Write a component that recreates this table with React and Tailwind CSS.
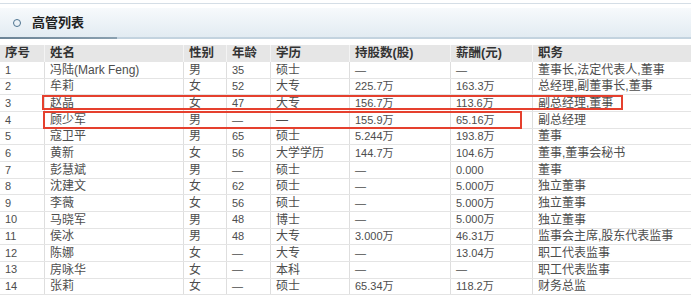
import React from 'react';

const cols = [
  { key: 'no', label: '序号', w: 'w-[45px]', num: true },
  { key: 'name', label: '姓名', w: 'w-[139px]' },
  { key: 'sex', label: '性别', w: 'w-[43px]' },
  { key: 'age', label: '年龄', w: 'w-[44px]', num: true },
  { key: 'edu', label: '学历', w: 'w-[79px]' },
  { key: 'shares', label: '持股数(股)', w: 'w-[101px]', num: true },
  { key: 'pay', label: '薪酬(元)', w: 'w-[82px]', num: true },
  { key: 'job', label: '职务', w: 'flex-1' },
];

const rows = [
  ['1', '冯陆(Mark Feng)', '男', '35', '硕士', '—', '—', '董事长,法定代表人,董事'],
  ['2', '牟莉', '女', '52', '大专', '225.7万', '163.3万', '总经理,副董事长,董事'],
  ['3', '赵晶', '女', '47', '大专', '156.7万', '113.6万', '副总经理,董事'],
  ['4', '顾少军', '男', '—', '—', '155.9万', '65.16万', '副总经理'],
  ['5', '寇卫平', '男', '65', '硕士', '5.244万', '193.8万', '董事'],
  ['6', '黄新', '女', '56', '大学学历', '144.7万', '104.6万', '董事,董事会秘书'],
  ['7', '彭慧斌', '男', '—', '硕士', '—', '0.000', '董事'],
  ['8', '沈建文', '女', '62', '硕士', '—', '5.000万', '独立董事'],
  ['9', '李薇', '女', '56', '硕士', '—', '5.000万', '独立董事'],
  ['10', '马晓军', '男', '48', '博士', '—', '5.000万', '独立董事'],
  ['11', '侯冰', '男', '48', '大专', '3.000万', '46.31万', '监事会主席,股东代表监事'],
  ['12', '陈娜', '女', '—', '大专', '—', '13.04万', '职工代表监事'],
  ['13', '房咏华', '女', '—', '本科', '—', '—', '职工代表监事'],
  ['14', '张莉', '女', '—', '硕士', '65.34万', '118.2万', '财务总监'],
];

const App = () => {
  return (
    <div
      className="w-[691px] h-[307px] bg-white overflow-hidden"
      style={{ fontFamily: '"Liberation Sans", "Noto Sans CJK SC", sans-serif' }}
    >
      {/* thin top rule */}
      <div className="pt-[3px]">
        <div className="h-[1px] bg-[#d5dee6]" />
      </div>

      {/* section title bar */}
      <div className="mt-[4px] h-[29px] bg-gradient-to-b from-[#f7fafc] to-[#e2ebf2] flex items-center pl-[13px]">
        <span className="w-[8px] h-[8px] rounded-full border-[1.5px] border-[#4d7390]" />
        <span className="ml-[11px] text-[13px] font-bold text-[#222]">高管列表</span>
      </div>
      <div className="flex h-[2px]">
        <div className="w-[117px] bg-gradient-to-r from-[#6c8496] to-[#8aa0b0]" />
        <div className="flex-1 bg-[#c3d3df]" />
      </div>

      {/* executives table */}
      <div className="relative mt-[6px]">
        <div className="flex h-[17px] bg-[#e6e6e6] text-[12.5px] font-bold text-[#333]">
          {cols.map((c, i) => (
            <div
              key={c.key}
              className={`${c.w} flex items-center pl-[5px] ${i < cols.length - 1 ? 'border-r border-[#f4f4f4]' : ''}`}
            >
              {c.label}
            </div>
          ))}
        </div>

        {rows.map((r) => (
          <div key={r[0]} className="flex h-[16.67px] border-b border-[#e4e4e4] text-[#4d4d4d]">
            {cols.map((c, i) => (
              <div
                key={c.key}
                className={`${c.w} flex items-center pl-[5px] whitespace-nowrap ${
                  c.num ? 'text-[11px]' : 'text-[12px]'
                } ${i < cols.length - 1 ? 'border-r border-[#dedede]' : ''}`}
              >
                {r[i]}
              </div>
            ))}
          </div>
        ))}

        {/* highlight boxes drawn over rows 3 and 4 */}
        <div className="absolute left-[42px] top-[50px] w-[581px] h-[15px] border-2 border-[#e5402e]" />
        <div className="absolute left-[43px] top-[66px] w-[479px] h-[18px] border-2 border-[#e5402e]" />
      </div>
    </div>
  );
};

export default App;
